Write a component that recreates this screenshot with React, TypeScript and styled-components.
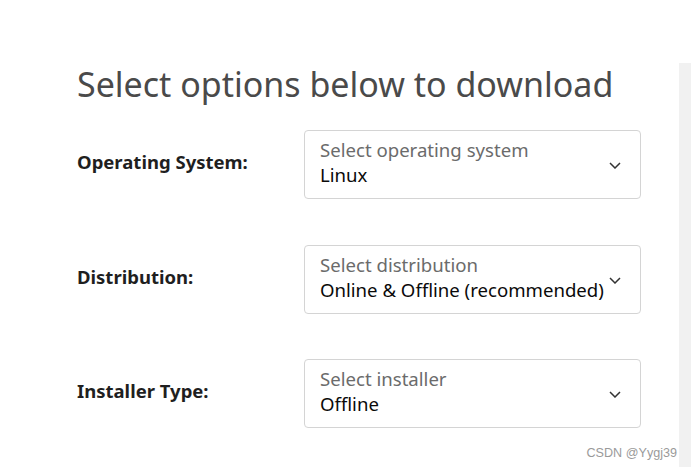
import styled, { createGlobalStyle } from "styled-components";

interface selectField {
  label: string;
  placeholder: string;
  value: string;
}

const fields: selectField[] = [
  { label: "Operating System:", placeholder: "Select operating system", value: "Linux" },
  { label: "Distribution:", placeholder: "Select distribution", value: "Online & Offline (recommended)" },
  { label: "Installer Type:", placeholder: "Select installer", value: "Offline" },
];

const GlobalStyle = createGlobalStyle`
  html, body {
    margin: 0;
    padding: 0;
    background: #ffffff;
  }
  body {
    font-family: "Noto Sans", "Open Sans", sans-serif;
  }
`

const Page = styled.div`
  display: flex;
  width: 691px;
  height: 467px;
  overflow: hidden;
`
const Content = styled.div`
  flex: 1;
  padding: 61px 0 0 77px;
  position: relative;
`
const Track = styled.div`
  width: 12px;
  margin-top: 63px;
  background: #f1f1f1;
`
const Title = styled.h1`
  margin: 0 0 23px 0;
  font-size: 34px;
  line-height: 46px;
  font-weight: 400;
  color: #4a4a4a;
`
const Rows = styled.div`
  display: flex;
  flex-direction: column;
  gap: 45.5px;
`
const Row = styled.div`
  display: flex;
  align-items: center;
`
const Label = styled.div`
  width: 227px;
  font-size: 18.5px;
  font-weight: 700;
  color: #1f1f1f;
  margin-top: -6px;
`
const Box = styled.div`
  position: relative;
  box-sizing: border-box;
  width: 337px;
  height: 69px;
  border: 1px solid #d4d4d4;
  border-radius: 4px;
  padding: 6px 0 0 15px;
  font-size: 18.6px;
  line-height: 25.4px;
  white-space: nowrap;
`
const Placeholder = styled.div`
  color: #6b6b6b;
`
const Value = styled.div`
  color: #0a0a0a;
`
const Chevron = styled.svg`
  position: absolute;
  right: 19px;
  top: 31px;
`
const Watermark = styled.div`
  position: absolute;
  right: 2px;
  bottom: 7px;
  font-family: "Liberation Sans", Arial, sans-serif;
  font-size: 12.6px;
  color: #9a9a9a;
`

const App = () => {
  return (
    <>
      <GlobalStyle />
      <Page>
        <Content>
          <Title>Select options below to download</Title>
          <Rows>
            {fields.map((f) => (
              <Row key={f.label}>
                <Label>{f.label}</Label>
                <Box>
                  <Placeholder>{f.placeholder}</Placeholder>
                  <Value>{f.value}</Value>
                  <Chevron width="12" height="7" viewBox="0 0 12 7" fill="none">
                    <path d="M1 1l5 5 5-5" stroke="#333" strokeWidth="1.5" />
                  </Chevron>
                </Box>
              </Row>
            ))}
          </Rows>
          <Watermark>CSDN @Yygj39</Watermark>
        </Content>
        <Track />
      </Page>
    </>
  );
};

export default App;
